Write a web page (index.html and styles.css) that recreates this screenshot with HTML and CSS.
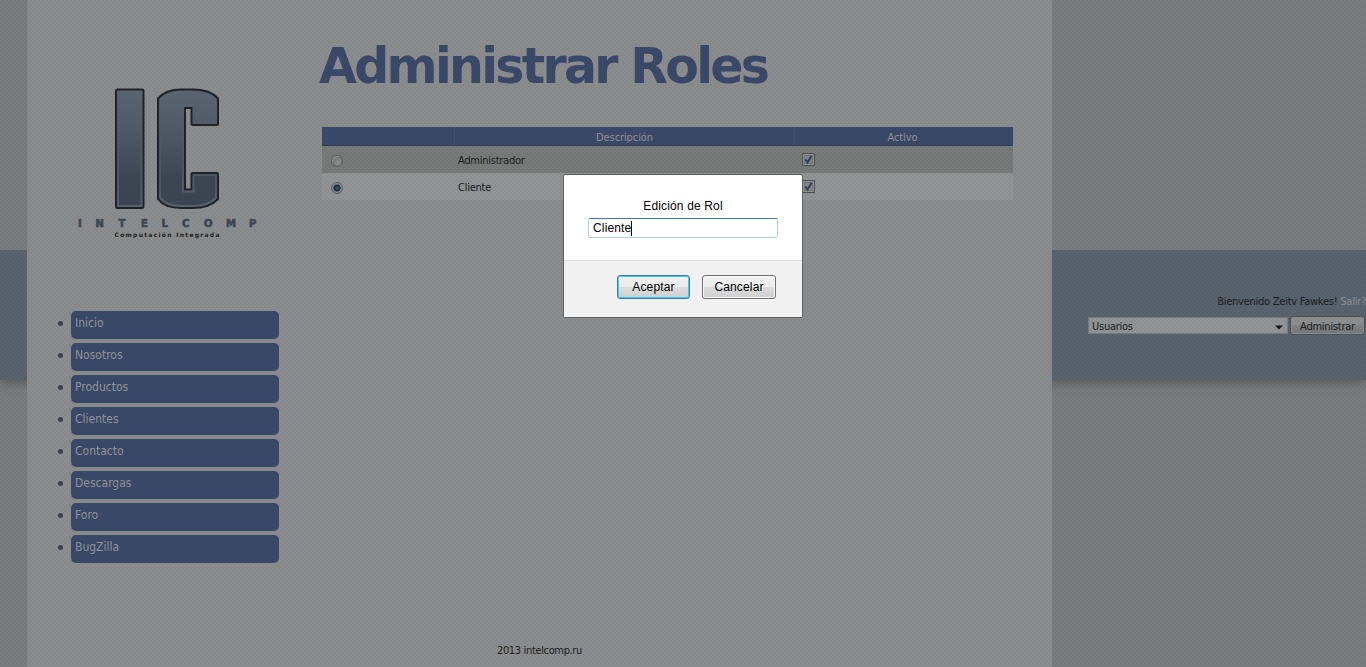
FILE: index.html
```html
<!DOCTYPE html>
<html lang="es">
<head>
<meta charset="utf-8">
<title>Administrar Roles</title>
<link rel="stylesheet" href="styles.css">
</head>
<body>
<div class="band"></div>
<div class="page">
  <main class="sheet">
    <aside class="sidebar">
      <svg class="logo" width="190" height="158" viewBox="0 0 190 158" role="img" aria-label="Intelcomp">
        <defs>
          <linearGradient id="metal" x1="0" y1="0" x2="0" y2="1">
            <stop offset="0" stop-color="#5b6673"/><stop offset=".35" stop-color="#505b68"/><stop offset=".75" stop-color="#3d4754"/><stop offset="1" stop-color="#3c4653"/>
          </linearGradient>
          <linearGradient id="edge" x1="0" y1="0" x2="0" y2="1">
            <stop offset=".2" stop-color="#566170" stop-opacity="0"/><stop offset="1" stop-color="#566170"/>
          </linearGradient>
        </defs>
        <g stroke="#202326" stroke-width="2" stroke-linejoin="round" transform="translate(.5 .5)">
          <path fill="url(#metal)" d="M42.500 7H67.500Q69 7 69 8.500V124Q69 125.500 67.500 125.500H43Q41.500 125.500 41.500 124V8.500Q41.500 7 42.500 7Z"/>
          <path fill="url(#metal)" d="M83.500 16Q91 7 107 7H118Q136 7 143.500 16V41.500Q143.500 42.500 142.500 42.500H118Q117 42.500 117 41.500V25.500H110.500V107H117V91.500Q117 90.500 118 90.500H142.500Q143.500 90.500 143.500 91.500V116.500Q135 125.500 118 125.500H107Q90 125.500 83.500 116.500Z"/>
        </g>
        <g fill="none" stroke="url(#edge)" stroke-width="2" transform="translate(.5 .5)">
          <path d="M43.500 9H67V123.500H43.500Z"/>
          <path d="M85.500 17Q92 9 107 9H118Q134 9 141.500 17V40.500H119V24H108.500V109H119V92.500H141.500V115.500Q134 123.500 118 123.500H107Q92 123.500 85.500 115.500Z"/>
        </g>
        <g class="logo-name">
          <text x="4" y="145">I</text><text x="21.500" y="145">N</text><text x="44.500" y="145">T</text><text x="67" y="145">E</text><text x="87.500" y="145">L</text><text x="108" y="145">C</text><text x="130" y="145">O</text><text x="152" y="145">M</text><text x="175" y="145">P</text>
        </g>
        <text class="logo-tag" x="40.500" y="154.500" textLength="105">Computación Integrada</text>
      </svg>
      <ul class="nav">
        <li><a>Inicio</a></li>
        <li><a>Nosotros</a></li>
        <li><a>Productos</a></li>
        <li><a>Clientes</a></li>
        <li><a>Contacto</a></li>
        <li><a>Descargas</a></li>
        <li><a>Foro</a></li>
        <li><a>BugZilla</a></li>
      </ul>
    </aside>
    <section class="content">
      <h1 class="title">Administrar Roles</h1>
      <div class="grid">
        <div class="row head"><span></span><span>Descripción</span><span>Activo</span></div>
        <div class="row odd">
          <span><i class="radio"></i></span><span>Administrador</span>
          <span><svg class="check" width="13" height="13" viewBox="0 0 13 13"><rect x=".5" y=".5" width="12" height="12" fill="#929394" stroke="#505152"/><rect x="2.500" y="2.500" width="8" height="8" fill="#858788" stroke="#747779"/><path d="M3.500 6.500L5.500 9.500L9.500 3" fill="none" stroke="#303d62" stroke-width="2"/></svg></span>
        </div>
        <div class="row even">
          <span><i class="radio on"></i></span><span>Cliente</span>
          <span><svg class="check" width="13" height="13" viewBox="0 0 13 13"><rect x=".5" y=".5" width="12" height="12" fill="#929394" stroke="#505152"/><rect x="2.500" y="2.500" width="8" height="8" fill="#858788" stroke="#747779"/><path d="M3.500 6.500L5.500 9.500L9.500 3" fill="none" stroke="#303d62" stroke-width="2"/></svg></span>
        </div>
      </div>
    </section>
    <footer class="footer">2013 intelcomp.ru</footer>
  </main>
  <div class="account">
    <p class="welcome"><span class="user">Bienvenido Zeitv Fawkes!</span> <a class="exit">Salir?</a></p>
    <div class="tools">
      <div class="select"><span>Usuarios</span><svg width="8" height="5" viewBox="0 0 8 5"><path d="M0 .5H8L4 4.500Z" fill="#17191b"/></svg></div>
      <div class="admin"><span>Administrar</span></div>
    </div>
  </div>
</div>
<div class="mesh"></div>
<div class="dialog">
  <div class="dialog-body">
    <label class="dialog-label">Edición de Rol</label>
    <div class="input">Cliente<i class="caret"></i></div>
  </div>
  <div class="dialog-foot">
    <div class="btn primary">Aceptar</div>
    <div class="btn">Cancelar</div>
  </div>
</div>
</body>
</html>
```
FILE: styles.css
```css
* { box-sizing: border-box; }
body {
  margin: 0;
  height: 667px;
  overflow: hidden;
  position: relative;
  background: #7b7c7d;
  color: #1b1d20;
  font-family: "DejaVu Sans Condensed", "DejaVu Sans", sans-serif;
  font-stretch: condensed;
  font-size: 11px;
  letter-spacing: -.25px;
}
.band {
  position: absolute;
  top: 250px;
  left: 0;
  right: 0;
  height: 130px;
  background: #59636e;
  box-shadow: 0 3px 10px rgba(50, 52, 54, .45);
  clip-path: inset(0 0 -20px 0);
}
.page { position: relative; display: flex; height: 667px; padding-left: 27px; }
.sheet {
  width: 1025px;
  background: #8b8c8d;
  display: grid;
  grid-template-columns: 292px 1fr;
  grid-template-rows: 643px 24px;
}
.sidebar { padding-top: 82px; }
.logo { display: block; margin-left: 47px; letter-spacing: 0; }
.logo-name { font: bold 10px "DejaVu Sans", sans-serif; font-stretch: normal; fill: #3c4656; stroke: #3c4656; stroke-width: .6px; }
.logo-tag { font: bold 6px "DejaVu Sans", sans-serif; fill: #1d1f22; }
.nav { list-style: none; margin: 71px 0 0 30px; padding: 0; display: flex; flex-direction: column; gap: 4px; letter-spacing: 0; }
.nav li { display: flex; align-items: flex-start; gap: 8px; padding-left: 1px; }
.nav li::before { content: ""; width: 5px; height: 5px; border-radius: 50%; background: #344361; margin-top: 10px; }
.nav a {
  width: 208px;
  height: 28px;
  border-radius: 5px;
  background: #3a4968;
  color: #929598;
  font-size: 12px;
  line-height: 24px;
  padding-left: 4px;
}
.title {
  margin: 37px 0 0;
  height: 60px;
  line-height: 60px;
  font-family: "DejaVu Sans", sans-serif;
  font-stretch: normal;
  font-size: 49px;
  font-weight: bold;
  letter-spacing: -2.700px;
  color: #3a4968;
  white-space: nowrap;
}
.grid { width: 691px; margin: 30px 0 0 3px; }
.row { display: grid; grid-template-columns: 132px 340px 219px; height: 27px; align-items: center; }
.row > span { padding: 1px 0 0 4px; display: flex; align-items: center; }
.head { height: 19px; background: #3a4968; color: #929598; border-bottom: 1px solid #303e5b; align-items: stretch; letter-spacing: -.1px; }
.head > span { justify-content: center; padding: 2px 0 0; }
.head > span + span { border-left: 1px solid #445171; }
.odd { background: #787979; }
.even { background: #929394; }
.row > span:first-child { padding: 0 0 0 9px; }
.row > span:last-child { padding: 0 0 0 8px; }
.head > span:last-child { padding: 2px 3px 0 0; }
.radio {
  width: 12px;
  height: 12px;
  margin-top: 3px;
  border-radius: 50%;
  border: 1px solid #5d5e5f;
  background: radial-gradient(circle at 60% 65%, #8e8f90, #797a7b 60%, #929394 65%);
}
.radio.on { background: radial-gradient(circle at 50% 50%, #3f7284 0, #17394c 2px, #172a39 3px, #8a8b8c 4px); }
.footer { grid-column: 1 / -1; text-align: center; line-height: 16px; white-space: nowrap; letter-spacing: -.35px; }
.account { width: 314px; padding-top: 295px; }
.welcome { margin: 0; height: 14px; line-height: 14px; text-align: right; white-space: nowrap; }
.exit { color: #8e9194; }
.tools { display: flex; margin: 7px 0 0 36px; gap: 2px; align-items: center; }
.select {
  width: 200px;
  height: 17px;
  display: flex;
  align-items: center;
  justify-content: space-between;
  padding: 1px 4px 0 3px;
  background: #929394;
  border: 1px solid #777e86;
}
.select svg { margin-top: 3px; }
.admin {
  width: 75px;
  height: 19px;
  display: flex;
  align-items: center;
  justify-content: center;
  padding-top: 1px;
  border: 1px solid #505254;
  border-radius: 3px;
  background: linear-gradient(#8d8e8f 50%, #828384 50%, #777879);
  box-shadow: inset 0 0 0 1px #8c8d8e;
}
.mesh {
  position: absolute;
  inset: 0;
  background:
    conic-gradient(rgba(0, 0, 0, .09) 25%, transparent 0 50%, rgba(0, 0, 0, .09) 0 75%, transparent 0) 0 0 / 4px 4px;
  opacity: .35;
}
.dialog {
  position: absolute;
  left: 563px;
  top: 174px;
  width: 240px;
  height: 144px;
  border: 1px solid #606162;
  border-radius: 2px;
  background: #fff;
  color: #000;
  font-family: "Liberation Sans", Arial, sans-serif;
  font-stretch: normal;
  font-size: 12px;
  letter-spacing: .15px;
}
.dialog-body { height: 85px; padding: 23px 24px 0; text-align: center; }
.dialog-label { display: block; line-height: 16px; }
.input {
  display: flex;
  align-items: center;
  height: 20px;
  margin-top: 4px;
  padding-left: 4px;
  border: 1px solid #b0cfe6;
  border-top-color: #3d7bad;
  border-radius: 2px;
}
.caret { width: 1px; height: 15px; background: #000; }
.dialog-foot {
  height: 57px;
  display: flex;
  justify-content: flex-end;
  gap: 12px;
  padding: 14px 26px 0 0;
  background: #f1f1f1;
  border-top: 1px solid #dfdfdf;
}
.btn {
  width: 74px;
  height: 24px;
  line-height: 22px;
  text-align: center;
  border: 1px solid #707070;
  border-radius: 3px;
  background: linear-gradient(#f2f2f2, #ebebeb 50%, #dddddd 50%, #cfcfcf);
  box-shadow: inset 0 0 0 1px #fafafa;
}
.primary { width: 73px; border-color: #3c7fb1; box-shadow: inset 0 0 0 1px #3fcbf3; }
```
